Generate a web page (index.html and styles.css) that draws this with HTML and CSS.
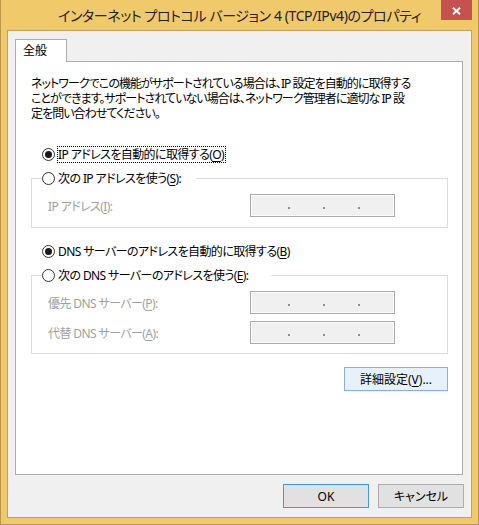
FILE: index.html
```html
<!DOCTYPE html>
<html lang="ja">
<head>
<meta charset="utf-8">
<title>インターネット プロトコル バージョン 4 (TCP/IPv4)のプロパティ</title>
<link rel="stylesheet" href="styles.css">
</head>
<body>
<div class="window">
  <div class="titlebar">
    <span class="tb-spacer"></span>
    <div class="title">インターネット プロトコル バージョン 4 (TCP/IPv4)のプロパティ</div>
    <button class="close" aria-label="閉じる">
      <svg width="9" height="8" viewBox="0 0 9 8"><path d="M1 0.8L8 7.2M8 0.8L1 7.2" stroke="#fff" stroke-width="2" fill="none"/></svg>
    </button>
  </div>
  <div class="client">
    <div class="tabs"><div class="tab">全般</div></div>
    <div class="panel">
      <p class="desc">ネットワークでこの機能がサポートされている場合は、IP 設定を自動的に取得する<br>ことができます。サポートされていない場合は、ネットワーク管理者に適切な IP 設<br>定を問い合わせてください。</p>

      <div class="radio-row first"><span class="radio checked"></span><span class="label focus">IP アドレスを自動的に取得する(<u>O</u>)</span></div>

      <fieldset class="group g-ip">
        <legend class="radio-row"><span class="radio"></span><span class="label">次の IP アドレスを使う(<u>S</u>):</span></legend>
        <div class="field-row"><span class="flabel">IP アドレス(<u>I</u>):</span><span class="ipbox"><i></i><i></i><i></i></span></div>
      </fieldset>

      <div class="radio-row dns-auto"><span class="radio checked"></span><span class="label">DNS サーバーのアドレスを自動的に取得する(<u>B</u>)</span></div>

      <fieldset class="group g-dns">
        <legend class="radio-row"><span class="radio"></span><span class="label">次の DNS サーバーのアドレスを使う(<u>E</u>):</span></legend>
        <div class="field-row"><span class="flabel">優先 DNS サーバー(<u>P</u>):</span><span class="ipbox"><i></i><i></i><i></i></span></div>
        <div class="field-row second"><span class="flabel">代替 DNS サーバー(<u>A</u>):</span><span class="ipbox"><i></i><i></i><i></i></span></div>
      </fieldset>

      <div class="adv-row"><button class="btn adv">詳細設定(<u>V</u>)...</button></div>
    </div>
    <div class="buttons">
      <button class="btn ok">OK</button>
      <button class="btn cancel">キャンセル</button>
    </div>
  </div>
</div>
</body>
</html>
```

FILE: styles.css
```css
* { box-sizing: border-box; }
html, body { margin: 0; padding: 0; }
body {
  width: 479px;
  height: 525px;
  overflow: hidden;
  font-family: "Noto Sans", "Noto Sans CJK JP", sans-serif;
  font-size: 12px;
  color: #000;
  font-feature-settings: "palt";
}
u { text-decoration: underline; text-underline-offset: 2px; }

.window {
  width: 479px;
  height: 525px;
  background: #f0c96b;
  border: 1px solid #b89650;
  border-top: 0;
  padding: 0 6px 6px;
  display: flex;
  flex-direction: column;
}
.titlebar {
  height: 30px;
  display: grid;
  grid-template-columns: 31px 1fr 31px;
  align-items: start;
}
.title {
  text-align: center;
  font-size: 14px;
  letter-spacing: -0.4px;
  line-height: 31px;
  color: #222;
  white-space: nowrap;
}
.close {
  width: 31px;
  height: 20px;
  background: #c75050;
  border: 0;
  padding: 2px 0 0;
  display: flex;
  align-items: center;
  justify-content: center;
}
.close svg { display: block; }

.client {
  flex: 1;
  background: #f0f0f0;
  border: 1px solid #c4a250;
  padding: 8px 8px 9px 7px;
  display: flex;
  flex-direction: column;
}
.tabs { display: flex; }
.tab {
  width: 52px;
  height: 23px;
  border: 1px solid #adadad;
  border-bottom: 0;
  background: #fff;
  margin-bottom: -1px;
  position: relative;
  z-index: 1;
  padding-left: 7px;
  line-height: 22px;
}
.panel {
  flex: 1;
  background: #fff;
  border: 1px solid #adadad;
  padding: 14px 14px 0 15px;
  display: flex;
  flex-direction: column;
  letter-spacing: -0.6px;
}
.desc {
  margin: 0;
  line-height: 15px;
  white-space: nowrap;
  letter-spacing: -0.95px;
}

.radio-row {
  display: flex;
  align-items: center;
  height: 17px;
  padding-left: 11px;
}
.radio-row.first { margin-top: 25px; }
.radio-row.dns-auto { margin-top: 15px; }
.radio {
  width: 13px;
  height: 13px;
  border: 1px solid #333;
  border-radius: 50%;
  background: #fff;
  display: flex;
  align-items: center;
  justify-content: center;
  flex: none;
}
.radio.checked::after {
  content: "";
  width: 7px;
  height: 7px;
  border-radius: 50%;
  background: #1a1a1a;
}
.label {
  margin-left: 2px;
  border: 1px solid transparent;
  line-height: 15px;
  white-space: nowrap;
}
.label.focus { border: 1px dotted #000; padding-right: 1px; }

.group {
  margin: 7px 0 0;
  min-width: 0;
  border: 1px solid #dcdcdc;
  padding: 7px 0 10px 16px;
}
.group legend {
  padding: 0 14px 0 0;
  margin-left: -6px;
}
.g-dns legend { padding-right: 22px; }
.g-dns { padding-bottom: 9px; }

.field-row {
  display: grid;
  grid-template-columns: 202px 145px;
  align-items: center;
  height: 23px;
}
.field-row.second { margin-top: 7px; }
.flabel { color: #a0a0a0; white-space: nowrap; }
.ipbox {
  height: 23px;
  border: 1px solid #ababab;
  background: #f0f0f0;
  box-shadow: inset 0 0 0 1px #fbfbfb;
  display: flex;
  padding: 12px 0 0 37px;
  gap: 33px;
}
.ipbox i {
  display: block;
  width: 2px;
  height: 2px;
  background: #8f8f8f;
}

.adv-row {
  display: flex;
  justify-content: flex-end;
  margin-top: 13px;
}
.btn {
  height: 24px;
  font-family: inherit;
  font-size: 12px;
  color: #000;
  padding: 0;
  border: 1px solid #adadad;
  background: #e1e1e1;
  font-feature-settings: "palt";
  letter-spacing: 0;
}
.adv {
  width: 104px;
  background: #e5f1fb;
  border-color: #7eb4ea;
}
.buttons {
  display: flex;
  justify-content: flex-end;
  gap: 9px;
  margin-top: 9px;
  margin-right: -1px;
}
.ok, .cancel { width: 86px; }
.ok { border-color: #3c99ee; }
```
